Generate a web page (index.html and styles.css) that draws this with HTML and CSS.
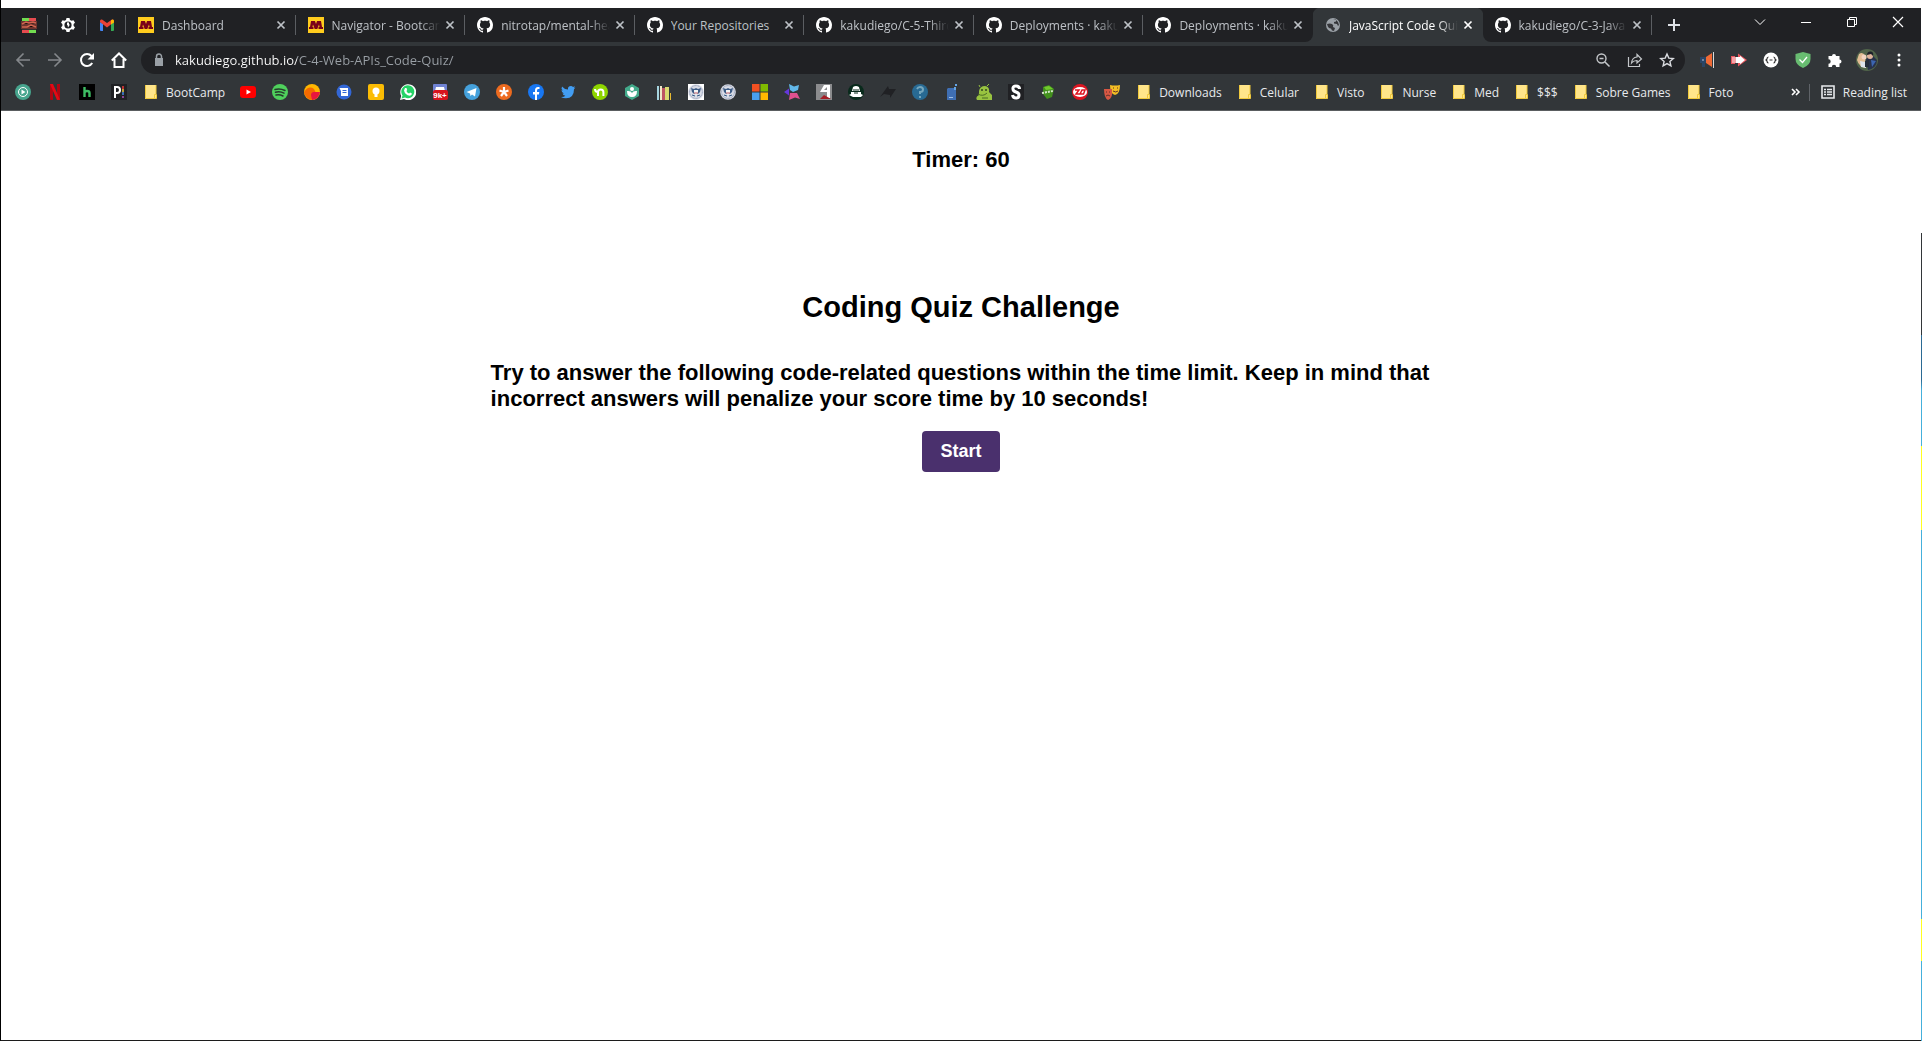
FILE: index.html
```html
<!DOCTYPE html>
<html lang="en">
<head>
<meta charset="utf-8">
<meta name="viewport" content="width=device-width, initial-scale=1">
<title>JavaScript Code Quiz</title>
<link rel="stylesheet" href="styles.css">
</head>
<body>
<svg class="sprite" aria-hidden="true">
  <symbol id="github" viewBox="0 0 16 16"><path fill="#fff" d="M8 0C3.58 0 0 3.58 0 8c0 3.54 2.29 6.53 5.47 7.59.4.07.55-.17.55-.38 0-.19-.01-.82-.01-1.49-2.01.37-2.53-.49-2.69-.94-.09-.23-.48-.94-.82-1.13-.28-.15-.68-.52-.01-.53.63-.01 1.08.58 1.23.82.72 1.21 1.87.87 2.33.66.07-.52.28-.87.51-1.07-1.78-.2-3.64-.89-3.64-3.95 0-.87.31-1.59.82-2.15-.08-.2-.36-1.02.08-2.12 0 0 .67-.21 2.2.82.64-.18 1.32-.27 2-.27s1.36.09 2 .27c1.53-1.04 2.2-.82 2.2-.82.44 1.1.16 1.92.08 2.12.51.56.82 1.27.82 2.15 0 3.07-1.87 3.75-3.65 3.95.29.25.54.73.54 1.48 0 1.07-.01 1.93-.01 2.2 0 .21.15.46.55.38A8.01 8.01 0 0 0 16 8c0-4.42-3.58-8-8-8z"/></symbol>
  <symbol id="goldm" viewBox="0 0 16 16"><path fill="#ffcc1d" d="M0 0h16v16H0z"/><path fill="#7a0019" d="M3 4h4l1 3 1-3h4l1 6h1v2h-4.500v-2h1L11 7.500 9.300 12H6.700L5 7.500 4.500 10h1v2H1v-2h1z"/></symbol>
  <symbol id="close" viewBox="0 0 16 16"><path stroke="currentColor" stroke-width="1.700" d="M4.500 4.500l7 7m0-7l-7 7"/></symbol>
  <symbol id="folder" viewBox="0 0 16 16"><path fill="#ffe58a" d="M2 1h11v14H2z"/><path fill="none" stroke="#f0c93c" d="M2.500 1v13.500h10.500M13 1v9"/><path fill="#ffe58a" stroke="#f0c93c" d="M11.500 10.500h2v4h-2z"/></symbol>
  <symbol id="seal" viewBox="0 0 16 16"><circle cx="8" cy="8" r="7.800" fill="#d9dce6"/><circle cx="8" cy="8" r="6.400" fill="none" stroke="#8f9bb5" stroke-dasharray="1 .5"/><path fill="#3c5c86" d="M3 4l3 1 2-1 2 1 3-1-1 4-2 2H6L4 8z"/><path fill="#f3f3f3" d="M6 6h4v3L8 11 6 9z"/><path fill="#b85b66" d="M6.500 8h1v2h-1zm2 0h1v2h-1z"/><path stroke="#315985" d="M4 11l3 1m5-1l-3 1"/></symbol>
</svg>

<div class="browser">
  <header class="chrome">
    <div class="strip">
      <nav class="pinned" aria-label="Pinned tabs">
        <a href="#" class="pin" aria-label="Game"><svg class="icon" viewBox="0 0 16 16"><path fill="#72dc50" d="M1 1h7v3H1zM8 13h7v3H8z"/><path fill="#e64b4f" d="M8 1h7v3H8zM1 13h7v3H1z"/><path fill="#6b332e" d="M0 4h16v8H0z"/><path stroke="#d0654f" stroke-width="1.500" d="M1 7l4-2 3 1 4-1 3 1M1 10h5l4-2 5 2"/><path fill="#303030" d="M1 12h14v1H1z"/></svg></a>
        <a href="#" class="pin" aria-label="Settings"><svg class="icon" viewBox="0 0 16 16"><path fill="#fff" d="M6.500 1h3l.5 2 1.500.8 2-.6 1.500 2.600L13.600 7v2l1.400 1.200-1.500 2.600-2-.6-1.500.8-.5 2h-3L6 13l-1.500-.8-2 .6L1 10.200 2.400 9V7L1 5.800l1.500-2.600 2 .6L6 3z"/><circle cx="8" cy="8" r="3.600" fill="#202124"/><path fill="#fff" d="M7 5.500h2v2h1L8 10.500 7.500 8H7z"/></svg></a>
        <a href="#" class="pin" aria-label="Gmail"><svg class="icon" viewBox="0 0 16 16"><path fill="#4285f4" d="M1 5l3 2v7H2q-1 0-1-1z"/><path fill="#34a853" d="M12 7l3-2v8q0 1-1 1h-2z"/><path fill="#ea4335" d="M1 4q0-2 2-1.500L8 6l5-3.500Q15 2 15 4v1l-7 5.500L1 5z"/><path fill="#fbbc04" d="M12 3.200q3-2 3 1.300v1L12 7.500z"/></svg></a>
      </nav>
      <div class="tabs">
        <div class="tab"><svg class="icon"><use href="#goldm"/></svg><span class="title">Dashboard</span><button class="x" aria-label="Close tab"><svg class="icon"><use href="#close"/></svg></button></div>
        <div class="tab"><svg class="icon"><use href="#goldm"/></svg><span class="title">Navigator - Bootcam</span><button class="x" aria-label="Close tab"><svg class="icon"><use href="#close"/></svg></button></div>
        <div class="tab"><svg class="icon"><use href="#github"/></svg><span class="title">nitrotap/mental-hea</span><button class="x" aria-label="Close tab"><svg class="icon"><use href="#close"/></svg></button></div>
        <div class="tab"><svg class="icon"><use href="#github"/></svg><span class="title short">Your Repositories</span><button class="x" aria-label="Close tab"><svg class="icon"><use href="#close"/></svg></button></div>
        <div class="tab"><svg class="icon"><use href="#github"/></svg><span class="title">kakudiego/C-5-Third</span><button class="x" aria-label="Close tab"><svg class="icon"><use href="#close"/></svg></button></div>
        <div class="tab"><svg class="icon"><use href="#github"/></svg><span class="title">Deployments · kakud</span><button class="x" aria-label="Close tab"><svg class="icon"><use href="#close"/></svg></button></div>
        <div class="tab before"><svg class="icon"><use href="#github"/></svg><span class="title">Deployments · kakud</span><button class="x" aria-label="Close tab"><svg class="icon"><use href="#close"/></svg></button></div>
        <div class="tab active"><svg class="icon" viewBox="0 0 16 16"><circle cx="8" cy="8" r="7" fill="#9aa0a6"/><path fill="#35363a" d="M2 7q3-1 5 0 2 1 1 3l2 1-1 3-2-.5-1-2q-3 0-4-4.500zM8 2.500l3 0v2L9 5l0 1.500 3 .5 1 2 1-1-1-3-2-2z"/></svg><span class="title">JavaScript Code Quiz</span><button class="x" aria-label="Close tab"><svg class="icon"><use href="#close"/></svg></button></div>
        <div class="tab after"><svg class="icon"><use href="#github"/></svg><span class="title">kakudiego/C-3-Java</span><button class="x" aria-label="Close tab"><svg class="icon"><use href="#close"/></svg></button></div>
      </div>
      <button class="newtab" aria-label="New tab"><svg class="icon" viewBox="0 0 16 16"><path stroke="#dee1e6" stroke-width="2" d="M8 2v12M2 8h12"/></svg></button>
      <div class="window">
        <button aria-label="Search tabs"><svg class="icon" viewBox="0 0 16 16"><path fill="none" stroke="#fff" d="M3 5.500l5 5 5-5"/></svg></button>
        <button aria-label="Minimize"><svg class="icon" viewBox="0 0 16 16"><path stroke="#fff" d="M3 8.500h10"/></svg></button>
        <button aria-label="Restore"><svg class="icon" viewBox="0 0 16 16"><path fill="none" stroke="#fff" d="M3.500 5.500h7v7h-7zM5.500 5.500v-2h7v7h-2"/></svg></button>
        <button aria-label="Close"><svg class="icon" viewBox="0 0 16 16"><path stroke="#fff" stroke-width="1.200" d="M3 3l10 10m0-10L3 13"/></svg></button>
      </div>
    </div>

    <div class="toolbar">
      <button class="tool" aria-label="Back"><svg class="icon" viewBox="0 0 16 16"><path fill="none" stroke="#85888c" stroke-width="1.600" d="M15 8H2m6.500-6.500L2 8l6.500 6.500"/></svg></button>
      <button class="tool" aria-label="Forward"><svg class="icon" viewBox="0 0 16 16"><path fill="none" stroke="#85888c" stroke-width="1.600" d="M1 8h13M7.500 1.500L14 8l-6.500 6.500"/></svg></button>
      <button class="tool" aria-label="Reload"><svg class="icon" viewBox="0 0 16 16"><path fill="none" stroke="#fff" stroke-width="2" d="M13.200 11A6 6 0 1 1 12.500 4"/><path fill="#fff" d="M15 1v6.500H8.500z"/></svg></button>
      <button class="tool" aria-label="Home"><svg class="icon" viewBox="0 0 16 16"><path fill="none" stroke="#fff" stroke-width="2" d="M.8 8.500L8 1.500l7.200 7M3.500 7v8h9V7"/></svg></button>
      <div class="omnibox">
        <svg class="icon" viewBox="0 0 16 16"><path fill="#9aa0a6" d="M4 6h8v8H4z"/><path fill="none" stroke="#9aa0a6" stroke-width="1.500" d="M5.500 6.500V4.500a2.500 2.500 0 0 1 5 0v2"/></svg>
        <input class="url" type="text" aria-label="Address" value="kakudiego.github.io/C-4-Web-APIs_Code-Quiz/">
        <button class="tool" aria-label="Zoom"><svg class="icon" viewBox="0 0 16 16"><circle cx="6.500" cy="6.500" r="4.500" fill="none" stroke="#c4c7ca" stroke-width="1.400"/><path stroke="#c4c7ca" stroke-width="1.500" d="M10 10l4.500 4.500M4.500 6.500h4"/></svg></button>
        <button class="tool" aria-label="Share"><svg class="icon" viewBox="0 0 16 16"><path fill="none" stroke="#c4c7ca" stroke-width="1.200" d="M1.500 5v9.500h11V12M10 2.500L14.500 7 10 11V8.500Q6.500 8.500 4.500 11 5 5.500 10 5z"/></svg></button>
        <button class="tool" aria-label="Bookmark this page"><svg class="icon" viewBox="0 0 16 16"><path fill="none" stroke="#dadce0" stroke-width="1.400" d="M8 2l1.800 4.100 4.500.4-3.400 3 1 4.400L8 11.600l-3.900 2.300 1-4.400-3.400-3 4.500-.4z"/></svg></button>
      </div>
      <button class="tool" aria-label="Announcements"><svg class="icon" viewBox="0 0 16 16"><path fill="#294566" d="M1 5h6v6H6v4H3v-4H1z"/><path fill="#f06a35" d="M7 5l6-4v14l-6-4z"/><path fill="#dadada" d="M14 0h1v16h-1z"/><path fill="#7083a0" d="M3 7h2v2H3z"/></svg></button>
      <button class="tool" aria-label="Recorder"><svg class="icon" viewBox="0 0 16 16"><path fill="#e9565e" d="M0 4h4v8H0zM7 1.500L16 8l-9 6.500z"/><path fill="#f3a3a7" d="M1 5h4v6H1z"/><path fill="#fff" d="M5 5h4V3.800L14 8l-5 4.200V11H5z"/></svg></button>
      <button class="tool" aria-label="JSON viewer"><svg class="icon" viewBox="0 0 16 16"><circle cx="8" cy="8" r="7.500" fill="#fff"/><path fill="none" stroke="#333" stroke-width="1.200" d="M5.500 5Q4 5 4 7L3 8l1 1q0 2 1.500 2M10.500 5Q12 5 12 7l1 1-1 1q0 2-1.500 2M6.500 8h3"/></svg></button>
      <button class="tool" aria-label="Ad blocker"><svg class="icon" viewBox="0 0 16 16"><path fill="#68bc71" d="M8 0l7.500 2v5q0 6-7.500 9Q.5 13 .5 7V2z"/><path fill="none" stroke="#fff" stroke-width="1.300" d="M4.500 7.500l3 3L12 5"/></svg></button>
      <button class="tool" aria-label="Extensions"><svg class="icon" viewBox="0 0 16 16"><path fill="#fff" d="M1.500 4H5a2 2 0 0 1 4 0h3.500v3.500a2 2 0 0 1 0 4V15H9.200a2.200 2.200 0 0 0-4.400 0H1.500v-3.300a2.200 2.200 0 0 0 0-4.400z"/></svg></button>
      <button class="tool" aria-label="Profile"><svg class="avatar" viewBox="0 0 22 22"><circle cx="11" cy="11" r="11" fill="#51654a"/><path fill="#28324b" d="M10 10l6-4 5 5q0 8-9 10z"/><path fill="#e2bd94" d="M3 5q4-3 6 2l1 12Q3 18 1 11z"/><circle cx="8" cy="8" r="2.500" fill="#f2d5c2"/><circle cx="14" cy="7" r="3" fill="#dfb49c"/><path fill="#1d2029" d="M11 6q0-4 4-3.500Q18 3 17 7l-2-2z"/><path fill="#dde3eb" d="M4 12l5 1 1 6-5-1z"/><path fill="#252c3b" d="M9 12l4-2v8h-4z"/><path fill="#3c65b0" d="M15 11l5 1-4 6z"/></svg></button>
      <button class="tool" aria-label="Menu"><svg class="icon" viewBox="0 0 16 16"><g fill="#fff"><circle cx="8" cy="3" r="1.500"/><circle cx="8" cy="8" r="1.500"/><circle cx="8" cy="13" r="1.500"/></g></svg></button>
    </div>

    <nav class="bookmarks" aria-label="Bookmarks">
      <a href="#" aria-label="Podcast"><svg class="icon" viewBox="0 0 16 16"><circle cx="8" cy="8" r="8" fill="#47a58e"/><circle cx="8" cy="8" r="4.500" fill="none" stroke="#fff"/><path fill="#fff" d="M6.500 5.500v5L10.500 8z"/></svg></a>
      <a href="#" aria-label="Netflix"><svg class="icon" viewBox="0 0 16 16"><path fill="#b00612" d="M3 0h3v16l-3-.3zM10 0h3v15.700L10 16z"/><path fill="#e50914" d="M3 0h3l7 15.700-3 .3z"/></svg></a>
      <a href="#" aria-label="Hulu"><svg class="icon" viewBox="0 0 16 16"><path fill="#000" d="M0 0h16v16H0z"/><path fill="none" stroke="#3dbb62" stroke-width="2.400" d="M5.500 3v10m0-4q0-2 2.500-2t2.500 2v4"/></svg></a>
      <a href="#" aria-label="Pi"><svg class="icon" viewBox="0 0 16 16"><path fill="#202124" d="M0 0h16v16H0z"/><path fill="none" stroke="#fff" stroke-width="2" d="M4 14V3h2q3 0 3 3T6 9H4"/><path stroke="#ee3737" stroke-width="1.500" d="M12 2v3"/><path stroke="#edcc3c" stroke-width="1.500" d="M12 5v3"/><path stroke="#438ae1" stroke-width="1.500" d="M12 8v3"/><path stroke="#ad51bd" stroke-width="1.500" d="M12 12v2"/></svg></a>
      <a href="#" class="folder"><svg class="icon"><use href="#folder"/></svg><span>BootCamp</span></a>
      <a href="#" aria-label="YouTube"><svg class="icon" viewBox="0 0 16 16"><rect y="2" width="16" height="12" rx="3" fill="#f00"/><path fill="#fff" d="M6.500 5.500v5L11 8z"/></svg></a>
      <a href="#" aria-label="Spotify"><svg class="icon" viewBox="0 0 16 16"><circle cx="8" cy="8" r="8" fill="#4fd15c"/><path fill="none" stroke="#253c2c" stroke-width="1.500" stroke-linecap="round" d="M3 5.500q5-1.500 10 1M3.500 8.200q4.500-1.200 8.500 1M4 11q3.500-1 7 1"/></svg></a>
      <a href="#" aria-label="Sunrise"><svg class="icon" viewBox="0 0 16 16"><circle cx="8" cy="8" r="8" fill="#ffb600"/><path fill="#f56a00" d="M0 8q5-7 10-3l4 8-5 3Q1 15 0 8z"/><path fill="#e8173e" d="M7 11q0-3 3-3h6q-1 7-8 8z"/></svg></a>
      <a href="#" aria-label="Messages"><svg class="icon" viewBox="0 0 16 16"><circle cx="8" cy="8" r="7.500" fill="#3367d6"/><path fill="#fff" d="M3.500 4H12v8H5V7z"/><path stroke="#3367d6" d="M6.500 6.500h4m-4 2h4"/></svg></a>
      <a href="#" aria-label="Keep"><svg class="icon" viewBox="0 0 16 16"><rect width="16" height="16" rx="2" fill="#fbbc04"/><circle cx="8" cy="7" r="3.500" fill="#fff"/><path fill="#fff" d="M6.500 10h3v3h-3z"/></svg></a>
      <a href="#" aria-label="WhatsApp"><svg class="icon" viewBox="0 0 16 16"><path fill="#fff" d="M0 16l1.200-4A8 8 0 1 1 4 15z"/><path fill="#25d366" d="M1.500 14.500l1-3A6.500 6.500 0 1 1 5 13.600z"/><path fill="#fff" d="M5 4l1.500 0 .7 2-.8 1q1 2 2.700 2.500l1-1 1.800 1q0 2-2 2.300Q5 11 4 6.500z"/></svg></a>
      <a href="#" aria-label="Discord, 9k+ unread"><svg class="icon" viewBox="0 0 16 16"><rect x="1" width="14" height="9" rx="1" fill="#7184d5"/><path fill="#fff" d="M4 3h8l1 4H3z"/><rect x="1" y="6" width="15" height="10" rx="2" fill="#d8141e"/><text class="badge" x="8" y="14" text-anchor="middle">9k+</text></svg></a>
      <a href="#" aria-label="Telegram"><svg class="icon" viewBox="0 0 16 16"><circle cx="8" cy="8" r="8" fill="#45a1dc"/><path fill="#fff" d="M2.500 8L12.500 4 11 12.500 8 10.500 6.500 12 6 9.500z"/></svg></a>
      <a href="#" aria-label="Asterisk"><svg class="icon" viewBox="0 0 16 16"><circle cx="8" cy="8" r="8" fill="#ed6b1f"/><path stroke="#fff" stroke-width="2.200" d="M8 8V3M8 8L3.500 6.500M8 8l4.500-1.500M8 8l-3 4M8 8l3 4"/></svg></a>
      <a href="#" aria-label="Facebook"><svg class="icon" viewBox="0 0 16 16"><circle cx="8" cy="8" r="8" fill="#1877f2"/><path fill="#fff" d="M7 16v-5.500H5V8h2V6.500Q7 3 10 3h1.500v2H10q-1 0-1 1.500V8h2.300l-.4 2.500H9V16z"/></svg></a>
      <a href="#" aria-label="Twitter"><svg class="icon" viewBox="0 0 16 16"><path fill="#429df2" d="M1 13q3 .2 4.300-1.300Q3 11.500 2.500 9.500H4Q1.500 8.800 1.500 6L3 6.500Q.7 4.500 2 2.500 4.500 5.500 8 5.600 7.500 2 11 2q1.200 0 2 .9l2-.7-1.200 1.700 1.600-.4L14 5.200Q14 14 6 14.300 3 14.300 1 13z"/></svg></a>
      <a href="#" aria-label="Nextdoor"><svg class="icon" viewBox="0 0 16 16"><circle cx="8" cy="8" r="8" fill="#8ed500"/><path fill="none" stroke="#fff" stroke-width="2" d="M3 5q0 3 3 3m0 4V8q0-2.500 2.700-2.500T11.400 8v4"/></svg></a>
      <a href="#" aria-label="Garden"><svg class="icon" viewBox="0 0 16 16"><path fill="#43aa8b" d="M8 0l7 4v8l-7 4-7-4V4z"/><circle cx="8" cy="5" r="2" fill="#fff"/><path fill="#fff" d="M3 7q4-.5 5 2 1-2.500 5-2 0 6-5 6T3 7z"/></svg></a>
      <a href="#" aria-label="Library"><svg class="icon" viewBox="0 0 16 16"><path fill="#a6d5df" d="M1 2h2v14H1z"/><path fill="#efe6c6" d="M4 2h2v14H4z"/><path fill="#bd5362" d="M6 4h3v12H6z"/><path fill="#d9da71" d="M9 3h4v13H9z"/><path fill="#e7ba32" d="M14 9h1v7h-1z"/></svg></a>
      <a href="#" aria-label="Homeland Security"><svg class="icon" viewBox="0 0 16 16"><path fill="#fff" d="M0 0h16v16H0z"/><use href="#seal"/></svg></a>
      <a href="#" aria-label="Immigration Services"><svg class="icon"><use href="#seal"/></svg></a>
      <a href="#" aria-label="Microsoft"><svg class="icon" viewBox="0 0 16 16"><path fill="#f25022" d="M0 0h7.500v7.500H0z"/><path fill="#7fba00" d="M8.500 0H16v7.500H8.500z"/><path fill="#4a9ff0" d="M0 8.500h7.500V16H0z"/><path fill="#ffb900" d="M8.500 8.500H16V16H8.500z"/></svg></a>
      <a href="#" aria-label="Star"><svg class="icon" viewBox="0 0 16 16"><path fill="#62b8ea" d="M5 0l5 2.500L15 1l-1 5-5 2-3-2z"/><path fill="#6537dc" d="M0 8l5-3.500v7z"/><path fill="#df5190" d="M6 9h7l3 6-5-1.500L5 16z"/></svg></a>
      <a href="#" aria-label="Portfolio"><svg class="icon" viewBox="0 0 16 16"><path fill="#8b8c8e" d="M0 0h16v16H0z"/><path fill="#fff" d="M8 1h6v13h-3V8H4z"/><path fill="#8b8c8e" d="M8 6l3-3v3z"/><path fill="#a61e26" d="M4 15l4-4 7 4z"/></svg></a>
      <a href="#" aria-label="Spy"><svg class="icon" viewBox="0 0 16 16"><circle cx="8" cy="8" r="8" fill="#082a1b"/><path fill="#fff" d="M5 3q3-2 6 0l1 4H4zM3 8h10v2l2 1-2 2H5l-4-2 2-1z"/><path stroke="#082a1b" d="M5 6h6M6 9h4"/></svg></a>
      <a href="#" aria-label="Arrow"><svg class="icon" viewBox="0 0 16 16"><path fill="#202124" d="M0 13L8 2l1 3h7l-6 9v-3l-6-1z"/></svg></a>
      <a href="#" aria-label="Help"><svg class="icon" viewBox="0 0 16 16"><circle cx="8" cy="8" r="8" fill="#286a93"/><path fill="none" stroke="#76a7bd" stroke-width="2" d="M5 5q1-2 3-2 3 0 3 2.500T8 8v2m0 2v2"/></svg></a>
      <a href="#" aria-label="Clipboard"><svg class="icon" viewBox="0 0 16 16"><path fill="#3f6fb4" d="M3 5l1-1h6v2h2v10H3z"/><path fill="#64a5e6" d="M10 3h2v3h-2zM11 0h2v2h-2z"/><path stroke="#a1c1e7" d="M5 13l1 1 1-1 1 1 1-1"/></svg></a>
      <a href="#" aria-label="Android"><svg class="icon" viewBox="0 0 16 16"><path fill="#98c340" d="M3 7q1-5 6-5 5 1 4 6l3 3v5H1q-2-3 2-5z"/><path stroke="#98c340" d="M4 3L3 1m8 1l2-2"/><circle cx="6" cy="6" r="1" fill="#334522"/><circle cx="10" cy="6" r="1" fill="#334522"/><path fill="none" stroke="#4b6d24" d="M2 10q5 3 9-1M6 14h6"/></svg></a>
      <a href="#" aria-label="Scribe"><svg class="icon" viewBox="0 0 16 16"><path fill="#202124" d="M0 0h16v16H0z"/><path fill="none" stroke="#fff" stroke-width="3" d="M11.500 5q0-3-3.500-3T5 5q0 2 3 3t3 3q0 3-3 3t-3.500-3"/></svg></a>
      <a href="#" aria-label="Torrent"><svg class="icon" viewBox="0 0 16 16"><path fill="#42901d" d="M3 3l6-2 5 4-2 8-5 2-4-5z"/><path fill="#72ca2d" d="M4 3l5-1 4 3-7 1z"/><path stroke="#d4e7c9" stroke-dasharray="2 1" stroke-width="2" d="M2 9l11-2"/></svg></a>
      <a href="#" aria-label="Zoom in offers"><svg class="icon" viewBox="0 0 16 16"><circle cx="8" cy="8" r="8" fill="#df1521"/><ellipse cx="8" cy="8" rx="7" ry="5" fill="#fff"/><path fill="none" stroke="#df1521" stroke-width="1.500" d="M3 6h4l-3 4h4l2-4h3l-1.500 4H8"/></svg></a>
      <a href="#" aria-label="Theatre"><svg class="icon" viewBox="0 0 16 16"><path fill="#f3bd24" d="M6 1q5 1 10 0 0 9-5 10-5-1-5-10z"/><path fill="#d75743" d="M0 5h8v6q-1 4-4 5-4-2-4-11z"/><path fill="none" stroke="#5f312b" d="M2 8h1m2 0h1M2 12q2-2 4 0M9 4h1m3 0h1M9 7q3 2 5 0"/></svg></a>
      <a href="#" class="folder"><svg class="icon"><use href="#folder"/></svg><span>Downloads</span></a>
      <a href="#" class="folder"><svg class="icon"><use href="#folder"/></svg><span>Celular</span></a>
      <a href="#" class="folder"><svg class="icon"><use href="#folder"/></svg><span>Visto</span></a>
      <a href="#" class="folder"><svg class="icon"><use href="#folder"/></svg><span>Nurse</span></a>
      <a href="#" class="folder"><svg class="icon"><use href="#folder"/></svg><span>Med</span></a>
      <a href="#" class="folder"><svg class="icon"><use href="#folder"/></svg><span>$$$</span></a>
      <a href="#" class="folder"><svg class="icon"><use href="#folder"/></svg><span>Sobre Games</span></a>
      <a href="#" class="folder"><svg class="icon"><use href="#folder"/></svg><span>Foto</span></a>
      <div class="overflow">
        <button aria-label="More bookmarks"><svg class="icon" viewBox="0 0 16 16"><path fill="none" stroke="#fff" stroke-width="1.600" d="M5 5l3 3-3 3m4-6l3 3-3 3"/></svg></button>
        <button class="reading"><svg class="icon" viewBox="0 0 16 16"><path fill="none" stroke="#e8eaed" stroke-width="1.600" d="M2 2h12v12H2z"/><path stroke="#e8eaed" stroke-width="1.500" d="M4 5.500h2M7 5.500h5M4 8h2M7 8h5M4 10.500h2M7 10.500h5"/></svg><span>Reading list</span></button>
      </div>
    </nav>
  </header>

  <main class="page">
    <p class="timer">Timer: 60</p>
    <section class="quiz">
      <h1>Coding Quiz Challenge</h1>
      <p class="intro">Try to answer the following code-related questions within the time limit. Keep in mind that incorrect answers will penalize your score time by 10 seconds!</p>
      <button class="start">Start</button>
    </section>
  </main>
</div>
</body>
</html>
```
FILE: styles.css
```css
* {
  box-sizing: border-box;
}

/* The 1px line at the right edge is the desktop showing beside the window. */
body {
  margin: 0;
  padding-right: 1px;
  background: linear-gradient(#fff 233px, #323639 233px 335px, #2b6a94 335px 380px, #45b0dc 390px 446px, #ffff20 446px 530px, #45b0dc 530px 919px, #ffff20 919px 961px, #45b0dc 961px) right / 1px 100% no-repeat;
  font-family: "Open Sans", "Noto Sans", sans-serif;
  font-size: 12px;
}

button,
input {
  padding: 0;
  border: 0;
  background: none;
  color: inherit;
  font: inherit;
}

a {
  color: inherit;
  text-decoration: none;
}

.sprite {
  display: none;
}

.icon {
  display: block;
  flex: none;
  width: 16px;
  height: 16px;
}

.browser {
  display: flex;
  flex-direction: column;
  min-height: 100vh;
  padding-top: 8px;
  border-left: 1px solid #000;
  border-bottom: 1px solid #1c1c1c;
}

.chrome {
  border-bottom: 1px solid #5a5d60;
  background: #323639;
  color: #e8eaed;
}

/* Tab strip */
.strip {
  display: flex;
  height: 34px;
  background: #202124;
}

.pinned {
  display: flex;
  padding-left: 8px;
}

.pin {
  display: flex;
  align-items: center;
  justify-content: center;
  width: 39px;
}

.pin,
.tab {
  background: linear-gradient(#5b5e62, #5b5e62) right / 1px 20px no-repeat;
}

.tabs {
  display: flex;
  flex: 1;
  min-width: 0;
  background: #323639;
}

.tab {
  display: flex;
  flex: 1;
  align-items: center;
  min-width: 0;
  padding: 0 7px 0 12px;
  background-color: #202124;
  color: #bdc1c6;
}

.title {
  flex: 1;
  margin-left: 8px;
  overflow: hidden;
  white-space: nowrap;
  -webkit-mask-image: linear-gradient(to left, transparent, #000 20px);
  mask-image: linear-gradient(to left, transparent, #000 20px);
}

.short {
  -webkit-mask-image: none;
  mask-image: none;
}

.x {
  margin-left: 2px;
}

.before {
  border-bottom-right-radius: 8px;
  background-image: none;
}

.after {
  border-bottom-left-radius: 8px;
}

.active {
  background: radial-gradient(circle at 8px 8px, #323639 8px, #202124 9px) left top / 8px 8px no-repeat, radial-gradient(circle at 0 8px, #323639 8px, #202124 9px) right top / 8px 8px no-repeat;
  color: #fff;
}

.newtab {
  width: 43px;
  padding-left: 14px;
}

.window {
  display: flex;
  padding-left: 42px;
}

.window button {
  display: flex;
  align-items: center;
  justify-content: center;
  width: 46px;
  height: 28px;
}

/* Toolbar */
.toolbar {
  display: flex;
  align-items: center;
  height: 36px;
  padding: 0 6px;
}

.tool {
  display: flex;
  flex: none;
  align-items: center;
  justify-content: center;
  width: 32px;
  height: 28px;
}

.avatar {
  width: 22px;
  height: 22px;
}

.omnibox {
  display: flex;
  flex: 1;
  align-items: center;
  height: 28px;
  margin: 0 6px;
  padding: 0 2px 0 10px;
  border-radius: 14px;
  background: #202124;
}

.url {
  flex: 1;
  min-width: 0;
  height: 24px;
  margin-left: 8px;
  background: linear-gradient(to right, #fff 122px, #9aa0a6 122px);
  -webkit-background-clip: text;
  background-clip: text;
  color: transparent;
  font-size: 13px;
}

/* Bookmarks bar */
.bookmarks {
  display: flex;
  gap: 16px;
  align-items: center;
  height: 32px;
  padding: 0 14px 4px;
  white-space: nowrap;
}

.folder,
.reading {
  display: flex;
  gap: 7px;
  align-items: center;
}

.folder {
  margin-right: -1px;
}

.badge {
  fill: #fff;
  font: bold 8px "Liberation Sans", sans-serif;
}

.overflow {
  display: flex;
  gap: 6px;
  align-items: center;
  margin-left: auto;
}

.reading {
  padding-left: 10px;
  border-left: 1px solid #5f6368;
}

/* Quiz page */
.page {
  flex: 1;
  padding: 36px 0;
  background: #fff;
  color: #000;
  font: bold 22px/26px "Liberation Sans", Arial, sans-serif;
}

.timer {
  margin: 0 0 117px;
  text-align: center;
}

.quiz {
  display: flex;
  flex-direction: column;
  align-items: center;
  width: 49%;
  margin: 0 auto;
}

.quiz h1 {
  margin: 0 0 36px;
  font-size: 29px;
  line-height: 34px;
}

.intro {
  margin: 0 0 19px;
}

.start {
  padding: 10px 18px;
  border-radius: 4px;
  background: #4a306d;
  color: #fff;
  font-size: 18px;
  line-height: 21px;
}
```
